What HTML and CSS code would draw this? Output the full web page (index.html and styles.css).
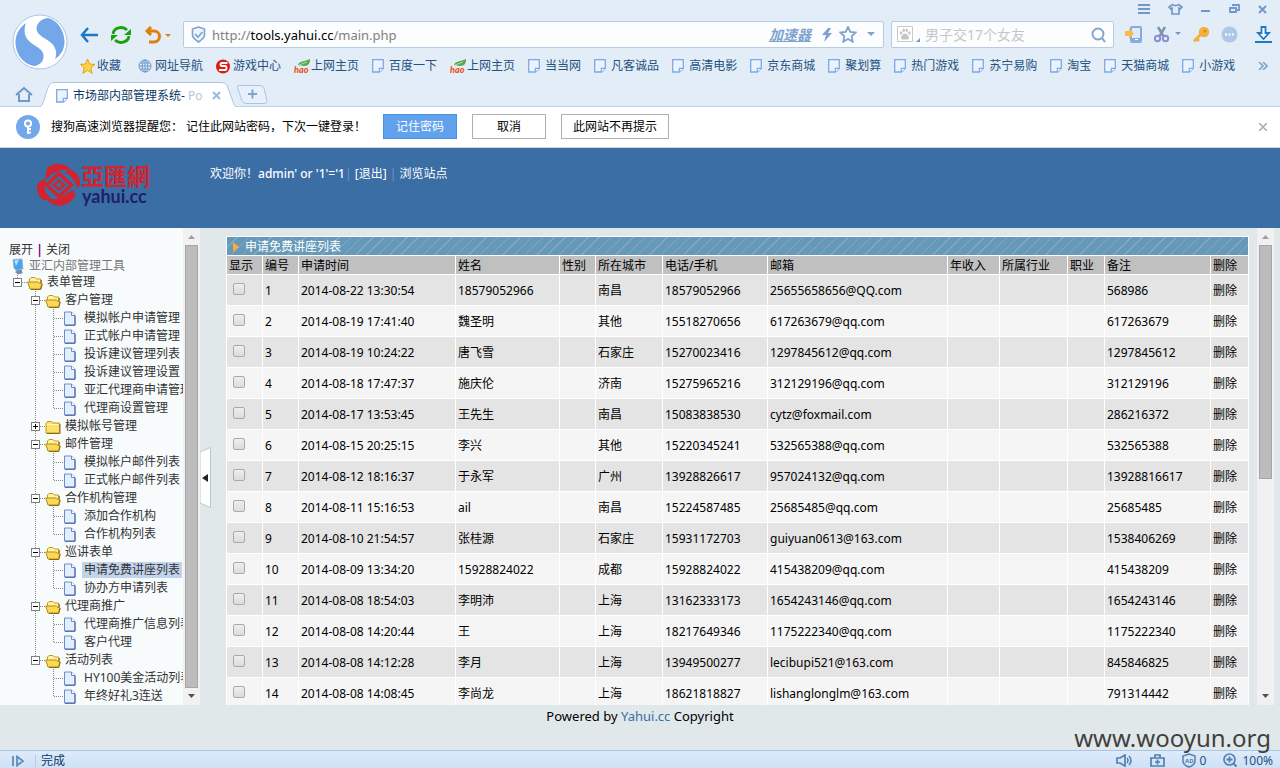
FILE: index.html
```
<!DOCTYPE html>
<html lang="zh-CN">
<head>
    <meta charset="UTF-8">
    <title>市场部内部管理系统- Powered by Yahui.cc</title>
    <link rel="stylesheet" href="styles.css">
</head>
<body>
    <svg class="sprite" aria-hidden="true">
        <symbol id="i-page" viewBox="0 0 12 14">
            <path d="M.7.7h10.600v8.500L7.500 13H.7z" fill="#eaf3ff" stroke="#7ea9e6" stroke-width="1.300"/>
            <path d="M7.300 13V9.300h4" fill="#fff" stroke="#7ea9e6" stroke-width="1.200"/>
        </symbol>
        <symbol id="i-leaf" viewBox="0 0 17 15">
            <path d="M4 6C5 2 9 3 16 0c0 4-1 7-6 7z" fill="#55a94b"/>
            <path d="M5 6l8-3" stroke="#b4dca0" fill="none"/>
        </symbol>
        <symbol id="i-file" viewBox="0 0 13 15">
            <path d="M1.500 1h7L12 4.500V14H1.500z" fill="#e3eeff" stroke="#6c8bcb"/>
            <path d="M8.500 1v3.500H12" fill="#fff" stroke="#6c8bcb"/>
            <path d="M12 5v9.300H2" fill="none" stroke="#4b5fa3"/>
        </symbol>
        <symbol id="i-folder" viewBox="0 0 16 14">
            <path d="M1 3.500L2.500 1.500h4L8 3h6.500v10H1z" fill="#fbe06a" stroke="#c19a1e"/>
            <path d="M2 4.500h11.500" stroke="#fff6b8"/>
            <path d="M15 4v9.500H2" stroke="#8d6a12" fill="none"/>
        </symbol>
        <symbol id="i-open" viewBox="0 0 16 14">
            <path d="M2.500 12V3l1.500-1.500h4L9.500 3h4v9z" fill="#fff2a0" stroke="#c19a1e"/>
            <path d="M.7 6h10.800l1 1.500h2.300L13.500 13H3z" fill="#f9d956" stroke="#b88c14"/>
            <path d="M14.300 4v3M15.300 8l-1.500 5.500H4" stroke="#8d6a12" fill="none"/>
        </symbol>
    </svg>

    <header class="chrome">
        <div class="chrome-top">
            <button class="brand" aria-label="菜单">
                <svg width="56" height="56" viewBox="0 0 56 56">
                    <circle cx="28" cy="28" r="27" fill="#fff" stroke="#a9c7ea"/>
                    <path d="M14 9C7 14 3 21 3.500 30 4.500 42 12 50 22 52c7-1 11-6 9-13-2-5-8-7-13-11-5-4-7-11-4-19z" fill="#73a7ea"/>
                    <path d="M36 4c-8 1-13 7-11 13 2 5 8 7 13 11 5 4 8 10 5 17 6-4 9.500-10 9.500-17C52.500 16 45 6 36 4z" fill="#73a7ea"/>
                </svg>
            </button>
            <div class="chrome-rows">
                <div class="window-controls">
                    <button aria-label="主菜单"><svg width="12" height="12"><path d="M0 2h12M0 6h12M0 10h12" stroke="#6f98c6" stroke-width="2"/></svg></button>
                    <button aria-label="皮肤"><svg width="15" height="12"><path d="M4.500 1.500c1.500 1.500 4.500 1.500 6 0L14 4l-2 2-1-.8V11H4V5.200L3 6 1 4z" fill="none" stroke="#6f98c6" stroke-width="1.700"/></svg></button>
                    <button aria-label="最小化"><svg width="10" height="12"><path d="M0 8h9" stroke="#6f98c6" stroke-width="2"/></svg></button>
                    <button aria-label="还原"><svg width="11" height="12"><path d="M3 2h7v5H8M1 5h6v4H1z" fill="none" stroke="#6f98c6" stroke-width="1.800"/></svg></button>
                    <button aria-label="关闭"><svg width="9" height="12"><path d="M1 3l7 7M8 3l-7 7" stroke="#6f98c6" stroke-width="2"/></svg></button>
                </div>
                <div class="toolbar">
                    <div class="nav-buttons">
                        <button aria-label="后退"><svg width="18" height="16"><path d="M8 1L2 8l6 7M2 8h16" fill="none" stroke="#1f78c4" stroke-width="2.500"/></svg></button>
                        <button aria-label="刷新"><svg width="22" height="20"><path d="M3 9a8 7 0 0 1 14-4M19 11a8 7 0 0 1-14 4" fill="none" stroke="#1ba012" stroke-width="2.800"/><path d="M21 4v6h-7zM1 16v-6h7z" fill="#1ba012"/></svg></button>
                        <button class="undo" aria-label="撤销"><svg width="27" height="18"><path d="M7 1L3 5l4 4M3 5h7a5 5 0 0 1 0 11H5" fill="none" stroke="#e07f0c" stroke-width="3"/><path d="M21 8h6l-3 3z" fill="#e07f0c"/></svg></button>
                    </div>
                    <div class="address">
                        <svg width="15" height="17"><path d="M7.500 1l6 2v6c0 3-3 5-6 7-3-2-6-4-6-7V3z" fill="#eef5fd" stroke="#7fa3cd" stroke-width="1.600"/><path d="M4 8l3 3 4.500-5" fill="none" stroke="#7fa3cd" stroke-width="1.700"/></svg>
                        <span class="url" role="textbox" aria-label="网址">http://<b>tools.yahui.cc</b>/main.php</span>
                        <a class="boost" href="#">加速器</a>
                        <svg width="12" height="16"><path d="M7 1h3L7 6h4L3 15l2-7H1z" fill="#7fa3cd"/></svg>
                        <svg width="18" height="17"><path d="M9 1l2.300 5 5.200.6-3.800 3.700 1 5.300L9 13l-4.700 2.600 1-5.300L1.500 6.600 6.700 6z" fill="none" stroke="#7fa3cd" stroke-width="1.800"/></svg>
                        <svg class="drop" width="8" height="5"><path d="M0 0h8L4 4z" fill="#7fa3cd"/></svg>
                    </div>
                    <form class="search">
                        <svg width="25" height="17"><path d="M.5.5h15v15H.5z" fill="#fff" stroke="#c9c9c9"/><g fill="#c3c5c6"><ellipse cx="4" cy="7" rx="1.200" ry="1.800"/><ellipse cx="6.700" cy="4.300" rx="1.200" ry="1.800"/><ellipse cx="9.700" cy="4.300" rx="1.200" ry="1.800"/><ellipse cx="12.300" cy="7" rx="1.200" ry="1.800"/><path d="M8 7.500c2 0 4 3 4 4.500 0 2-2.500 1.500-4 1.500s-4 .5-4-1.500c0-1.500 2-4.500 4-4.500z"/></g><path d="M19 16h4v-4z" fill="#6f98c6"/></svg>
                        <input type="text" placeholder="男子交17个女友" aria-label="搜索">
                        <button type="button" aria-label="搜索"><svg width="16" height="16"><circle cx="7" cy="7" r="5.500" fill="none" stroke="#7fa3cd" stroke-width="1.800"/><path d="M11 11l3 4" stroke="#7fa3cd" stroke-width="2"/></svg></button>
                    </form>
                    <div class="tools">
                        <button aria-label="手机"><svg width="18" height="17"><rect x="6" y="1" width="10" height="15" rx="1" fill="#dfeafb" stroke="#86abe0" stroke-width="2"/><path d="M6 13.500h10" stroke="#86abe0" stroke-width="3"/><path d="M10 13.500h3" stroke="#fff"/><path d="M0 5h4V2l5 5.500-5 5.500v-3H0z" fill="#f6bb4c"/></svg></button>
                        <button class="scissors" aria-label="截图"><svg width="28" height="17"><path d="M4 1l6 10M11 1L5 11" stroke="#7f96ae" stroke-width="2.500"/><circle cx="3.500" cy="12.500" r="2.700" fill="none" stroke="#8a8fd0" stroke-width="2"/><circle cx="11.500" cy="12.500" r="2.700" fill="none" stroke="#8a8fd0" stroke-width="2"/><path d="M21 6h6l-3 3z" fill="#6f98c6"/></svg></button>
                        <button aria-label="密码"><svg width="17" height="17"><path d="M9 7l-8 8.500M3 12l3 3" stroke="#f1b040" stroke-width="3"/><circle cx="11" cy="6" r="5.200" fill="#f1b040"/><circle cx="12" cy="5" r="1.500" fill="#d98f20"/></svg></button>
                        <button aria-label="更多"><svg width="17" height="17"><circle cx="8.500" cy="8.500" r="8" fill="#adc7e6"/><path d="M4 7.500h2v2H4zM7.500 7.500h2v2h-2zM11 7.500h2v2h-2z" fill="#fff"/></svg></button>
                        <button class="download" aria-label="下载"><svg width="17" height="17"><path d="M6.500 1h4v6h3.500l-5.500 6L3 7h3.500z" fill="#fff" stroke="#1f78c4" stroke-width="1.800"/><path d="M0 16h17" stroke="#1f78c4" stroke-width="2"/></svg></button>
                    </div>
                </div>
                <nav class="bookmarks">
                    <a class="favorites" href="#"><svg width="17" height="16"><path d="M7.500 1l2 5 5.500.4-4.200 3.600 1.300 5.300-4.600-2.900-4.600 2.900 1.300-5.300L.5 6.400 5.500 6z" fill="#ffd43e" stroke="#e5a017"/></svg>收藏</a>
                    <a href="#"><svg width="17" height="15"><g fill="none" stroke="#6d98cb"><circle cx="7" cy="7" r="6"/><ellipse cx="7" cy="7" rx="2.800" ry="6"/><path d="M1 7h12M7 1v12M2 4h10M2 10h10"/></g></svg>网址导航</a>
                    <a href="#"><svg width="17" height="15"><circle cx="7" cy="7.500" r="7" fill="#d81e14"/><path d="M11.500 4H6C4 4 4 7 6 7h3c2 0 2 4 0 4H3" fill="none" stroke="#fff" stroke-width="1.800"/></svg>游戏中心</a>
                    <a href="#"><svg width="17" height="15"><use href="#i-leaf"/><text class="hao" x="0" y="14">hao</text></svg>上网主页</a>
                    <a href="#"><svg width="17" height="14"><use href="#i-page" width="12"/></svg>百度一下</a>
                    <a href="#"><svg width="17" height="15"><use href="#i-leaf"/><text class="hao" x="0" y="14">hao</text></svg>上网主页</a>
                    <a href="#"><svg width="17" height="14"><use href="#i-page" width="12"/></svg>当当网</a>
                    <a href="#"><svg width="17" height="14"><use href="#i-page" width="12"/></svg>凡客诚品</a>
                    <a href="#"><svg width="17" height="14"><use href="#i-page" width="12"/></svg>高清电影</a>
                    <a href="#"><svg width="17" height="14"><use href="#i-page" width="12"/></svg>京东商城</a>
                    <a href="#"><svg width="17" height="14"><use href="#i-page" width="12"/></svg>聚划算</a>
                    <a href="#"><svg width="17" height="14"><use href="#i-page" width="12"/></svg>热门游戏</a>
                    <a href="#"><svg width="17" height="14"><use href="#i-page" width="12"/></svg>苏宁易购</a>
                    <a href="#"><svg width="17" height="14"><use href="#i-page" width="12"/></svg>淘宝</a>
                    <a href="#"><svg width="17" height="14"><use href="#i-page" width="12"/></svg>天猫商城</a>
                    <a href="#"><svg width="17" height="14"><use href="#i-page" width="12"/></svg>小游戏</a>
                    <button class="more" aria-label="更多书签"><svg width="10" height="8"><path d="M1 0l4 4-4 4M5 0l4 4-4 4" fill="none" stroke="#7fa3cd" stroke-width="1.600"/></svg></button>
                </nav>
            </div>
        </div>
        <div class="tabs">
            <button class="home" aria-label="主页"><svg width="18" height="16"><path d="M1 9l8-7 8 7M4 8v7h10V8" fill="none" stroke="#6f98c6" stroke-width="2"/></svg></button>
            <div class="tab">
                <svg class="tab-shape" width="197" height="25"><path d="M0 25C5 22 6 5 11 1.500Q12 .5 14 .5h168q3 0 5 3l7 19q1 2 3 2.500" fill="#fff" stroke="#a9c5e4"/></svg>
                <svg width="17" height="14"><use href="#i-page" width="12"/></svg>
                <span class="tab-title">市场部内部管理系统- <i>Po</i></span>
                <button aria-label="关闭标签"><svg width="9" height="9"><path d="M1 1l7 7M8 1L1 8" stroke="#9db9da" stroke-width="2"/></svg></button>
            </div>
            <button class="new-tab" aria-label="新标签"><svg width="31" height="19"><path d="M1 .5h22q3 0 4 3l3 12q0 3-2 3H9q-3 0-4-3L.5 2.500Q0 .5 2 .5z" fill="#e8f1fb" stroke="#a9c5e4"/><path d="M11 9h9M15.500 4.500v9" stroke="#7fa3cd" stroke-width="2"/></svg></button>
        </div>
    </header>

    <div class="notice">
        <svg width="24" height="24"><circle cx="12" cy="12" r="12" fill="#73a9ea"/><circle cx="12" cy="8.500" r="3" fill="none" stroke="#fff" stroke-width="2"/><path d="M12 11v8M12 14h3M12 17.500h3" stroke="#fff" stroke-width="2"/></svg>
        <p>搜狗高速浏览器提醒您： 记住此网站密码，下次一键登录！</p>
        <button class="primary">记住密码</button>
        <button>取消</button>
        <button class="wide">此网站不再提示</button>
        <button class="dismiss" aria-label="关闭"><svg width="8" height="8"><path d="M0 0l8 8M8 0L0 8" stroke="#aaa" stroke-width="1.500"/></svg></button>
    </div>

    <div class="site-header">
        <div class="logo">
            <svg width="44" height="44" viewBox="0 0 44 44">
                <g fill="#d2232e">
                    <path d="M10 5Q20-3 33 5l2 4q-11-5-21 3l-6 5z"/>
                    <path d="M34 7q10 4 9 16l-3 2q-1-7-8-13l-4-3z"/>
                    <path d="M34 38Q24 47 12 39l-3-4q11 4 20-4l7-4q5 5-2 11z"/>
                    <path d="M9 16Q-3 18 1 30q3 8 9 7l4-2Q6 29 8 20z"/>
                    <path d="M22 8l15 14-15 14L7 22zM22 13l-10 9 10 9 10-9z" fill-rule="evenodd"/>
                    <path d="M22 16l7 6-7 6-7-6zM22 19l-3 3 3 3 3-3z" fill-rule="evenodd"/>
                </g>
            </svg>
            <div class="logo-text"><strong>亞匯網</strong><span>yahui.cc</span></div>
        </div>
        <p class="welcome">欢迎你！<b>admin' or '1'='1</b><i>|</i> <a href="#">[退出]</a> <i>|</i> <a href="#">浏览站点</a></p>
    </div>

    <div class="workspace">
        <aside class="sidebar">
            <div class="sidebar-body">
                <p class="tree-actions"><a href="#">展开</a> <i>|</i> <a href="#">关闭</a></p>
                <div class="tree-root"><svg width="20" height="17"><path d="M4 1.500L13 1l1 10-7 1.500L5 10z" fill="#42a4ee" stroke="#a9b6cc"/><path d="M5.500 2.500L10 2 7 8z" fill="#b9e4ff"/><path d="M9 12h4v2l1 1-5 1.500L6 14z" fill="#7d88ab"/></svg>亚汇内部管理工具</div>
                <ul class="tree">
                    <li>
                        <div class="node"><button class="toggle minus" aria-label="折叠"></button><svg class="icon" width="16" height="14"><use href="#i-open"/></svg><a href="#">表单管理</a></div>
                        <ul>
                            <li>
                                <div class="node"><button class="toggle minus" aria-label="折叠"></button><svg class="icon" width="16" height="14"><use href="#i-open"/></svg><a href="#">客户管理</a></div>
                                <ul>
                                    <li class="leaf"><svg class="icon" width="13" height="15"><use href="#i-file"/></svg><a href="#">模拟帐户申请管理</a></li>
                                    <li class="leaf"><svg class="icon" width="13" height="15"><use href="#i-file"/></svg><a href="#">正式帐户申请管理</a></li>
                                    <li class="leaf"><svg class="icon" width="13" height="15"><use href="#i-file"/></svg><a href="#">投诉建议管理列表</a></li>
                                    <li class="leaf"><svg class="icon" width="13" height="15"><use href="#i-file"/></svg><a href="#">投诉建议管理设置</a></li>
                                    <li class="leaf"><svg class="icon" width="13" height="15"><use href="#i-file"/></svg><a href="#">亚汇代理商申请管理</a></li>
                                    <li class="leaf"><svg class="icon" width="13" height="15"><use href="#i-file"/></svg><a href="#">代理商设置管理</a></li>
                                </ul>
                            </li>
                            <li>
                                <div class="node"><button class="toggle plus" aria-label="展开"></button><svg class="icon" width="16" height="14"><use href="#i-folder"/></svg><a href="#">模拟帐号管理</a></div>
                            </li>
                            <li>
                                <div class="node"><button class="toggle minus" aria-label="折叠"></button><svg class="icon" width="16" height="14"><use href="#i-open"/></svg><a href="#">邮件管理</a></div>
                                <ul>
                                    <li class="leaf"><svg class="icon" width="13" height="15"><use href="#i-file"/></svg><a href="#">模拟帐户邮件列表</a></li>
                                    <li class="leaf"><svg class="icon" width="13" height="15"><use href="#i-file"/></svg><a href="#">正式帐户邮件列表</a></li>
                                </ul>
                            </li>
                            <li>
                                <div class="node"><button class="toggle minus" aria-label="折叠"></button><svg class="icon" width="16" height="14"><use href="#i-open"/></svg><a href="#">合作机构管理</a></div>
                                <ul>
                                    <li class="leaf"><svg class="icon" width="13" height="15"><use href="#i-file"/></svg><a href="#">添加合作机构</a></li>
                                    <li class="leaf"><svg class="icon" width="13" height="15"><use href="#i-file"/></svg><a href="#">合作机构列表</a></li>
                                </ul>
                            </li>
                            <li>
                                <div class="node"><button class="toggle minus" aria-label="折叠"></button><svg class="icon" width="16" height="14"><use href="#i-open"/></svg><a href="#">巡讲表单</a></div>
                                <ul>
                                    <li class="leaf"><svg class="icon" width="13" height="15"><use href="#i-file"/></svg><a class="selected" href="#">申请免费讲座列表</a></li>
                                    <li class="leaf"><svg class="icon" width="13" height="15"><use href="#i-file"/></svg><a href="#">协办方申请列表</a></li>
                                </ul>
                            </li>
                            <li>
                                <div class="node"><button class="toggle minus" aria-label="折叠"></button><svg class="icon" width="16" height="14"><use href="#i-open"/></svg><a href="#">代理商推广</a></div>
                                <ul>
                                    <li class="leaf"><svg class="icon" width="13" height="15"><use href="#i-file"/></svg><a href="#">代理商推广信息列表</a></li>
                                    <li class="leaf"><svg class="icon" width="13" height="15"><use href="#i-file"/></svg><a href="#">客户代理</a></li>
                                </ul>
                            </li>
                            <li>
                                <div class="node"><button class="toggle minus" aria-label="折叠"></button><svg class="icon" width="16" height="14"><use href="#i-open"/></svg><a href="#">活动列表</a></div>
                                <ul>
                                    <li class="leaf"><svg class="icon" width="13" height="15"><use href="#i-file"/></svg><a href="#">HY100美金活动列表</a></li>
                                    <li class="leaf"><svg class="icon" width="13" height="15"><use href="#i-file"/></svg><a href="#">年终好礼3连送</a></li>
                                </ul>
                            </li>
                        </ul>
                    </li>
                </ul>
            </div>
            <div class="scrollbar">
                <svg width="17" height="17"><path d="M5 11h7l-3.500-4z" fill="#a0a0a0"/></svg>
                <div class="thumb thumb-full"></div>
                <svg width="17" height="17"><path d="M5 6h7l-3.500 4z" fill="#505050"/></svg>
            </div>
        </aside>
        <div class="splitter">
            <button aria-label="收起侧栏"><svg width="11" height="61"><path d="M0 5l10.500-4.500v60L0 56z" fill="#fff" stroke="#b9cbd0"/><path d="M8 27v8l-6-4z" fill="#222"/></svg></button>
        </div>
        <main class="content">
            <table class="list">
                <colgroup>
                    <col class="c-show"><col class="c-id"><col class="c-time"><col class="c-name"><col class="c-sex"><col class="c-city"><col class="c-phone"><col class="c-mail"><col class="c-income"><col class="c-trade"><col class="c-job"><col class="c-note"><col class="c-del">
                </colgroup>
                <thead>
                    <tr class="list-title"><th colspan="13"><svg width="6" height="10"><path d="M0 0l6 5-6 5z" fill="#ffa940"/></svg>申请免费讲座列表</th></tr>
                    <tr><th>显示</th><th>编号</th><th>申请时间</th><th>姓名</th><th>性别</th><th>所在城市</th><th>电话/手机</th><th>邮箱</th><th>年收入</th><th>所属行业</th><th>职业</th><th>备注</th><th>删除</th></tr>
                </thead>
                <tbody>
                    <tr><td><input type="checkbox" aria-label="显示 1"></td><td>1</td><td>2014-08-22 13:30:54</td><td>18579052966</td><td></td><td>南昌</td><td>18579052966</td><td>25655658656@QQ.com</td><td></td><td></td><td></td><td>568986</td><td><a href="#">删除</a></td></tr>
                    <tr><td><input type="checkbox" aria-label="显示 2"></td><td>2</td><td>2014-08-19 17:41:40</td><td>魏圣明</td><td></td><td>其他</td><td>15518270656</td><td>617263679@qq.com</td><td></td><td></td><td></td><td>617263679</td><td><a href="#">删除</a></td></tr>
                    <tr><td><input type="checkbox" aria-label="显示 3"></td><td>3</td><td>2014-08-19 10:24:22</td><td>唐飞雪</td><td></td><td>石家庄</td><td>15270023416</td><td>1297845612@qq.com</td><td></td><td></td><td></td><td>1297845612</td><td><a href="#">删除</a></td></tr>
                    <tr><td><input type="checkbox" aria-label="显示 4"></td><td>4</td><td>2014-08-18 17:47:37</td><td>施庆伦</td><td></td><td>济南</td><td>15275965216</td><td>312129196@qq.com</td><td></td><td></td><td></td><td>312129196</td><td><a href="#">删除</a></td></tr>
                    <tr><td><input type="checkbox" aria-label="显示 5"></td><td>5</td><td>2014-08-17 13:53:45</td><td>王先生</td><td></td><td>南昌</td><td>15083838530</td><td>cytz@foxmail.com</td><td></td><td></td><td></td><td>286216372</td><td><a href="#">删除</a></td></tr>
                    <tr><td><input type="checkbox" aria-label="显示 6"></td><td>6</td><td>2014-08-15 20:25:15</td><td>李兴</td><td></td><td>其他</td><td>15220345241</td><td>532565388@qq.com</td><td></td><td></td><td></td><td>532565388</td><td><a href="#">删除</a></td></tr>
                    <tr><td><input type="checkbox" aria-label="显示 7"></td><td>7</td><td>2014-08-12 18:16:37</td><td>于永军</td><td></td><td>广州</td><td>13928826617</td><td>957024132@qq.com</td><td></td><td></td><td></td><td>13928816617</td><td><a href="#">删除</a></td></tr>
                    <tr><td><input type="checkbox" aria-label="显示 8"></td><td>8</td><td>2014-08-11 15:16:53</td><td>ail</td><td></td><td>南昌</td><td>15224587485</td><td>25685485@qq.com</td><td></td><td></td><td></td><td>25685485</td><td><a href="#">删除</a></td></tr>
                    <tr><td><input type="checkbox" aria-label="显示 9"></td><td>9</td><td>2014-08-10 21:54:57</td><td>张桂源</td><td></td><td>石家庄</td><td>15931172703</td><td>guiyuan0613@163.com</td><td></td><td></td><td></td><td>1538406269</td><td><a href="#">删除</a></td></tr>
                    <tr><td><input type="checkbox" aria-label="显示 10"></td><td>10</td><td>2014-08-09 13:34:20</td><td>15928824022</td><td></td><td>成都</td><td>15928824022</td><td>415438209@qq.com</td><td></td><td></td><td></td><td>415438209</td><td><a href="#">删除</a></td></tr>
                    <tr><td><input type="checkbox" aria-label="显示 11"></td><td>11</td><td>2014-08-08 18:54:03</td><td>李明沛</td><td></td><td>上海</td><td>13162333173</td><td>1654243146@qq.com</td><td></td><td></td><td></td><td>1654243146</td><td><a href="#">删除</a></td></tr>
                    <tr><td><input type="checkbox" aria-label="显示 12"></td><td>12</td><td>2014-08-08 14:20:44</td><td>王</td><td></td><td>上海</td><td>18217649346</td><td>1175222340@qq.com</td><td></td><td></td><td></td><td>1175222340</td><td><a href="#">删除</a></td></tr>
                    <tr><td><input type="checkbox" aria-label="显示 13"></td><td>13</td><td>2014-08-08 14:12:28</td><td>李月</td><td></td><td>上海</td><td>13949500277</td><td>lecibupi521@163.com</td><td></td><td></td><td></td><td>845846825</td><td><a href="#">删除</a></td></tr>
                    <tr><td><input type="checkbox" aria-label="显示 14"></td><td>14</td><td>2014-08-08 14:08:45</td><td>李尚龙</td><td></td><td>上海</td><td>18621818827</td><td>lishanglonglm@163.com</td><td></td><td></td><td></td><td>791314442</td><td><a href="#">删除</a></td></tr>
                </tbody>
            </table>
        </main>
        <div class="scrollbar">
            <svg width="17" height="17"><path d="M5 11h7l-3.500-4z" fill="#a0a0a0"/></svg>
            <div class="thumb thumb-half"></div>
            <svg width="17" height="17"><path d="M5 6h7l-3.500 4z" fill="#505050"/></svg>
        </div>
    </div>

    <footer class="site-footer">
        Powered by <a href="#">Yahui.cc</a> Copyright
        <span class="watermark">www.wooyun.org</span>
    </footer>

    <div class="statusbar">
        <button class="panel-toggle" aria-label="侧边栏"><svg width="12" height="12"><path d="M1 1v10M5 1.500v9l6-4.500z" fill="none" stroke="#5f8bb8" stroke-width="1.800"/></svg></button>
        <span class="state">完成</span>
        <svg width="17" height="13"><path d="M1 4h3l5-3v11L4 9H1z" fill="none" stroke="#5580ae" stroke-width="1.700"/><path d="M11 4q2 2.500 0 5M13 2q4 4.500 0 9" fill="none" stroke="#5580ae" stroke-width="1.500"/></svg>
        <svg width="15" height="13"><path d="M1 4h13v8H1zM5 4V1h5v3M7.500 5.500v5M5 8h5" fill="none" stroke="#5580ae" stroke-width="1.700"/></svg>
        <span class="stat"><svg width="14" height="15"><path d="M7 1l6 2v5q0 4-6 6-6-2-6-6V3z" fill="none" stroke="#5580ae" stroke-width="1.500"/><text class="ad" x="3" y="10">AD</text></svg>0</span>
        <span class="stat"><svg width="15" height="15"><circle cx="6.500" cy="6.500" r="5.500" fill="none" stroke="#5580ae" stroke-width="1.700"/><path d="M3.500 6.500h6M6.500 3.500v6M10.500 10.500l3 3" stroke="#5580ae" stroke-width="1.800"/></svg>100%</span>
    </div>
</body>
</html>
```
FILE: styles.css
```
* {
    box-sizing: border-box;
}

body {
    margin: 0;
    height: 100vh;
    display: flex;
    flex-direction: column;
    overflow: hidden;
    background: #e1e8ea;
    color: #000;
    font-family: "Noto Sans", "Noto Sans CJK SC", sans-serif;
    font-size: 12px;
    line-height: 18px;
}

a {
    color: inherit;
    text-decoration: none;
}

p {
    margin: 0;
}

i {
    font-style: normal;
}

svg {
    display: block;
    flex: none;
}

button {
    padding: 0;
    border: 0;
    background: none;
    color: inherit;
    font: inherit;
    cursor: pointer;
}

.sprite {
    position: absolute;
    width: 0;
    height: 0;
}

/* browser chrome */
.chrome {
    flex: none;
    background: #e3edf8;
}

.chrome-top {
    display: flex;
    height: 82px;
}

.brand {
    flex: none;
    align-self: flex-start;
    margin: 14px 10px 0 12px;
}

.chrome-rows {
    flex: 1;
    min-width: 0;
}

.window-controls {
    display: flex;
    justify-content: flex-end;
    align-items: center;
    gap: 18px;
    height: 21px;
    padding: 0 13px 4px 0;
}

.toolbar {
    display: flex;
    align-items: center;
    height: 27px;
}

.nav-buttons {
    display: flex;
    align-items: center;
    gap: 12px;
    width: 105px;
    padding-left: 2px;
}

.address {
    display: flex;
    flex: 1;
    align-items: center;
    gap: 6px;
    height: 27px;
    padding: 0 8px 0 7px;
    border: 1px solid #b7cce4;
    border-radius: 2px;
    background: #fbfdfe;
}

.url {
    flex: 1;
    color: #808080;
    font-size: 13px;
}

.url b {
    color: #000;
    font-weight: 400;
}

.boost {
    margin-right: 4px;
    color: #7fa3cd;
    font-size: 14px;
    font-weight: 700;
    font-style: italic;
    text-decoration: underline;
}

.address .drop {
    margin-left: 4px;
}

.search {
    display: flex;
    align-items: center;
    width: 223px;
    height: 27px;
    margin: 0 11px 0 7px;
    padding: 0 6px 0 5px;
    border: 1px solid #b7cce4;
    border-radius: 2px;
    background: #fbfdfe;
}

.search input {
    flex: 1;
    min-width: 0;
    padding: 0 3px;
    border: 0;
    outline: 0;
    background: none;
    font: inherit;
    font-size: 14px;
}

.search input::placeholder {
    color: #c3c7cb;
}

.tools {
    display: flex;
    align-items: center;
    gap: 11px;
    padding-right: 8px;
}

.tools .download {
    margin-left: 6px;
}

.bookmarks {
    display: flex;
    align-items: center;
    gap: 13px;
    height: 34px;
    padding: 2px 12px 0 2px;
    color: #24527f;
    white-space: nowrap;
}

.bookmarks a {
    display: flex;
    align-items: center;
}

.bookmarks .favorites {
    margin-right: 4px;
}

.bookmarks .more {
    margin-left: auto;
}

.hao {
    fill: #e9541a;
    font-family: Lato, sans-serif;
    font-size: 9px;
    font-style: italic;
    font-weight: 900;
}

.tabs {
    display: flex;
    height: 25px;
    border-bottom: 1px solid #bdd2ea;
}

.home {
    padding: 0 7px 0 15px;
}

.tab {
    position: relative;
    display: flex;
    align-items: center;
    width: 197px;
    height: 25px;
    padding: 2px 16px 0 16px;
    color: #0b3a66;
}

.tab svg,
.tab-title,
.tab button {
    position: relative;
}

.tab .tab-shape {
    position: absolute;
    left: 0;
    top: 0;
}

.tab-title {
    flex: 1;
    white-space: nowrap;
}

.tab-title i {
    color: #b9c6d4;
}

.new-tab {
    align-self: flex-start;
    padding-top: 3px;
}

/* password prompt */
.notice {
    display: flex;
    flex: none;
    align-items: center;
    gap: 15px;
    height: 41px;
    padding: 0 13px 1px 16px;
    border-bottom: 1px solid #ccd4dc;
    background: #fff;
}

.notice p {
    width: 317px;
    margin-left: -4px;
    white-space: nowrap;
}

.notice button {
    width: 74px;
    height: 25px;
    border: 1px solid #b0b0b0;
    background: #fff;
}

.notice .primary {
    border-color: #4590ea;
    background: #62a1ec;
    color: #fff;
}

.notice .wide {
    width: 108px;
}

.notice .dismiss {
    width: auto;
    margin-left: auto;
    border: 0;
}

/* site header */
.site-header {
    display: flex;
    flex: none;
    height: 80px;
    background: #3b6ea5;
    color: #fff;
}

.logo {
    display: flex;
    align-items: flex-start;
    width: 210px;
    padding: 15px 0 0 37px;
}

.logo-text {
    display: flex;
    flex-direction: column;
}

.logo-text strong {
    color: #d2232e;
    font-family: "Noto Sans CJK TC", sans-serif;
    font-size: 23px;
    line-height: 24px;
}

.logo-text span {
    padding-left: 1px;
    color: #1e1f68;
    font-family: Lato, sans-serif;
    font-size: 18px;
    font-weight: 700;
    line-height: 18px;
}

.welcome {
    padding-top: 17px;
}

.welcome b {
    font-weight: 500;
}

.welcome i {
    color: #6f97c2;
}

/* sidebar and tree */
.workspace {
    display: flex;
    flex: 1;
    min-height: 0;
}

.sidebar {
    display: flex;
    flex: none;
    width: 200px;
    background: #f7fbfc;
}

.sidebar-body {
    flex: 1;
    padding: 13px 0 0 9px;
    overflow: hidden;
    color: #333;
    white-space: nowrap;
}

.tree-actions i {
    color: #800080;
    font-weight: 700;
}

.tree-root {
    display: flex;
    align-items: center;
    height: 14px;
    color: #777;
}

.tree,
.tree ul {
    margin: 0;
    padding: 0;
    list-style: none;
}

.tree ul {
    padding-left: 18px;
}

.tree li {
    background: repeating-linear-gradient(to bottom, #888 0 1px, transparent 1px 2px) 8px 0 / 1px 100% no-repeat;
}

.tree li:last-child {
    background-size: 1px 9px;
}

.node,
.leaf {
    display: flex;
    align-items: center;
    height: 18px;
}

.node::before,
.leaf::before {
    content: "";
    flex: none;
    width: 9px;
    height: 1px;
    margin: 0 0 0 9px;
    background: repeating-linear-gradient(to right, #888 0 1px, transparent 1px 2px);
}

.node::before {
    order: 1;
    width: 5px;
    margin: 0;
}

.node > * {
    order: 2;
}

.node .toggle {
    order: 0;
    flex: none;
    width: 9px;
    height: 9px;
    margin-left: 4px;
    border: 1px solid #808080;
}

.minus {
    background: linear-gradient(#000, #000) center / 5px 1px no-repeat #fff;
}

.plus {
    background: linear-gradient(#000, #000) center / 5px 1px no-repeat, linear-gradient(#000, #000) center / 1px 5px no-repeat #fff;
}

.node a,
.leaf a {
    flex: none;
    padding: 0 2px;
    line-height: 16px;
}

.leaf .icon {
    margin-right: 6px;
}

.node .icon {
    margin: 2px 2px 0 0;
}

.tree .selected {
    background: #c2d3ee;
}

.scrollbar {
    display: flex;
    flex: none;
    flex-direction: column;
    align-items: center;
    width: 17px;
    background: #f1f1f1;
}

.scrollbar svg:last-child {
    margin-top: auto;
}

.thumb {
    width: 13px;
    border: 1px solid #a6a6a6;
    background: #bcbcbc;
}

.thumb-full {
    flex: 1;
}

.thumb-half {
    height: 49%;
}

.splitter {
    display: flex;
    flex: none;
    align-items: center;
    width: 12px;
    padding-top: 22px;
}

/* application list */
.content {
    flex: 1;
    min-width: 0;
    padding: 8px 8px 0 14px;
    overflow: hidden;
}

.workspace > .scrollbar {
    margin-right: 6px;
}

.list {
    width: 100%;
    table-layout: fixed;
    border-spacing: 1px;
    background: #fff;
}

.list th,
.list td {
    padding: 2px 2px 0;
    text-align: left;
    font-weight: 400;
    line-height: 16px;
    white-space: nowrap;
}

.list th {
    height: 18px;
    background: #c0c0c0;
}

.list td {
    height: 30px;
    background: #e4e4e4;
}

.list tbody tr:nth-child(even) td {
    background: #f5f5f5;
}

.list .list-title th {
    padding-left: 6px;
    background: repeating-linear-gradient(135deg, #6699b9 0 7px, #7eaac6 7px 8px);
    color: #fff;
}

.list-title svg {
    display: inline-block;
    margin-right: 6px;
    vertical-align: -1px;
}

.list input {
    display: block;
    appearance: none;
    width: 12px;
    height: 12px;
    margin: 0 4px 4px;
    border: 1px solid #aaa;
    border-radius: 2px;
    background: linear-gradient(#eee, #dcdcdc);
}

.c-show, .c-id, .c-sex { width: 35px; }
.c-time { width: 156px; }
.c-name { width: 103px; }
.c-city { width: 66px; }
.c-phone { width: 104px; }
.c-mail { width: 179px; }
.c-income { width: 51px; }
.c-trade { width: 67px; }
.c-job { width: 36px; }
.c-note { width: 105px; }
.c-del { width: 37px; }

/* footer and status bar */
.site-footer {
    position: relative;
    flex: none;
    height: 45px;
    padding-top: 2px;
    font-size: 13px;
    text-align: center;
}

.site-footer a {
    color: #3b6ea5;
}

.watermark {
    position: absolute;
    right: 9px;
    bottom: -4px;
    color: #404040;
    font-size: 24px;
    line-height: 32px;
}

.statusbar {
    display: flex;
    flex: none;
    align-items: center;
    gap: 17px;
    height: 18px;
    padding: 2px 7px 0 0;
    border-top: 1px solid #a9c6e6;
    background: linear-gradient(#dcebfc, #cfe1f5);
    color: #24527f;
    line-height: 15px;
}

.panel-toggle {
    display: flex;
    justify-content: center;
    width: 36px;
    border-right: 1px solid #b5cde8;
}

.state {
    flex: 1;
    margin-left: -12px;
    color: #0b3a66;
}

.stat {
    display: flex;
    align-items: center;
    gap: 4px;
}

.ad {
    fill: #5580ae;
    font-size: 6px;
    font-weight: 700;
}
```
